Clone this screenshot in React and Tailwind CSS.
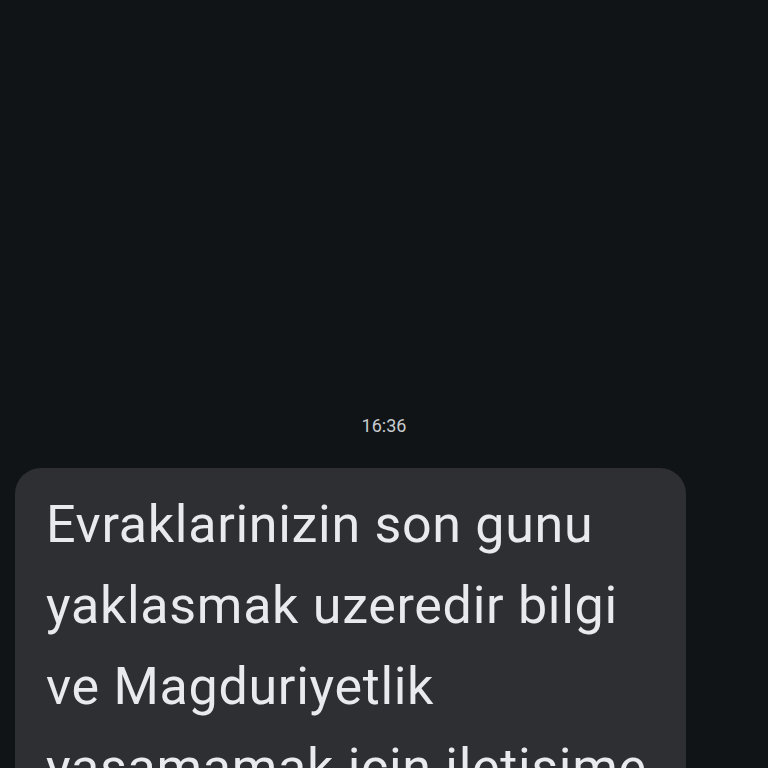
export default function App() {
  const lines = [
    "Evraklarinizin son gunu",
    "yaklasmak uzeredir bilgi",
    "ve Magduriyetlik",
    "yasamamak icin iletisime",
    "geciniz",
  ]

  return (
    <div className="h-[768px] w-full overflow-hidden bg-[#111417] font-['Roboto',sans-serif]">
      <div className="flex flex-col pt-[414px]">
        {/* Timestamp */}
        <div className="text-center text-[18px] leading-[24px] text-[#c8cbcf]">16:36</div>

        {/* Message bubble */}
        <div className="ml-[15px] mt-[30px] w-[671px] rounded-[26px] bg-[#2d2f32] px-[31px] pt-[16px] pb-6">
          <p className="text-[52px] leading-[81px] tracking-[0.7px] text-[#e8eaed]">
            {lines.map((line, i) => (
              <span key={i} className="block whitespace-nowrap">
                {line}
              </span>
            ))}
          </p>
        </div>
      </div>
    </div>
  )
}
